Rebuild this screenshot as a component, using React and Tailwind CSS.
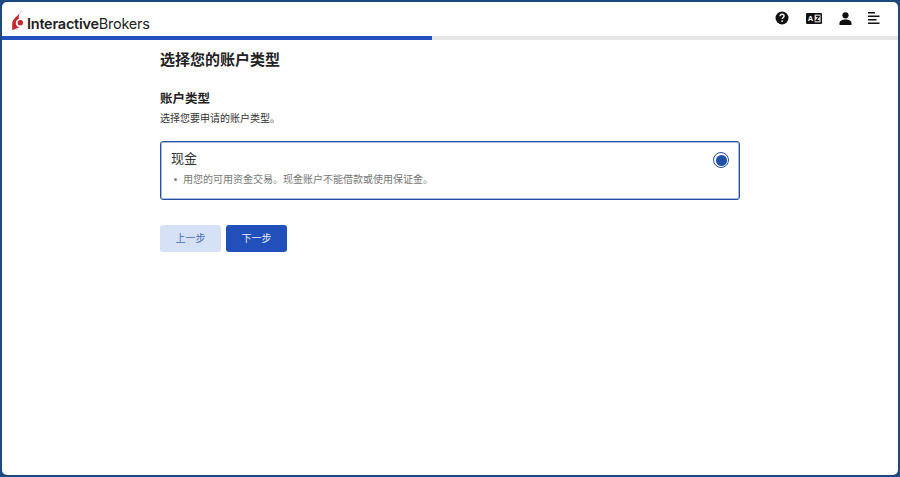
import { useState } from "react";

const FONT = "font-['Inter','Liberation_Sans','Noto_Sans_CJK_SC',sans-serif]";

function Logo() {
  return (
    <div className="flex items-end">
      <svg width="13" height="21" viewBox="0 0 13 21" className="shrink-0">
        <path d="M9.6 0 L9.2 1.4 C8 3.4 5.4 5.2 3 8 C1.2 10 0.2 11.6 0.2 13.6 L0.2 20.2 L7.4 17.2 C5 16.8 3.8 15 3.8 13 C3.8 11 5 9.6 6.8 9 C6.2 6 7.8 2.8 9.6 0 Z" fill="#c8252c" />
        <circle cx="8.3" cy="12.8" r="2.7" fill="#c8252c" />
      </svg>
      <span className="ml-[2px] text-[14.5px] leading-[15px] tracking-[-0.25px] text-[#222]">
        <span className="font-semibold">Interactive</span>Brokers
      </span>
    </div>
  );
}

function HelpIcon() {
  return (
    <svg width="14" height="14" viewBox="0 0 14 14">
      <circle cx="7" cy="7" r="6.5" fill="#111" />
      <path d="M5 5.3 C5 4 6 3.3 7.1 3.3 C8.3 3.3 9.1 4.1 9.1 5.1 C9.1 6.5 7.3 6.6 7.3 8" fill="none" stroke="#fff" strokeWidth="1.4" />
      <circle cx="7.2" cy="10.1" r="0.9" fill="#fff" />
    </svg>
  );
}

function TranslateIcon() {
  return (
    <svg width="16" height="11" viewBox="0 0 16 11">
      <rect x="0" y="0" width="16" height="11" rx="1.2" fill="#111" />
      <text x="4.4" y="8.4" fontSize="7.5" fontWeight="700" textAnchor="middle" fill="#fff" fontFamily="Liberation Sans">A</text>
      <rect x="8.6" y="1.6" width="6" height="7.8" fill="#ddd" />
      <path d="M10 3.4 H13.2 L10 7.6 H13.4" fill="none" stroke="#111" strokeWidth="1.1" />
    </svg>
  );
}

function UserIcon() {
  return (
    <svg width="13" height="13" viewBox="0 0 13 13">
      <circle cx="6.5" cy="3.3" r="3.1" fill="#111" />
      <path d="M0.5 13 V11.2 C0.5 8.8 3.2 7.5 6.5 7.5 C9.8 7.5 12.5 8.8 12.5 11.2 V13 Z" fill="#111" />
    </svg>
  );
}

function MenuIcon() {
  return (
    <svg width="12" height="12" viewBox="0 0 12 12">
      <path d="M0 0.8 H7 M0 4.3 H11.5 M0 7.8 H8.5 M0 11.3 H11.5" stroke="#111" strokeWidth="1.5" />
    </svg>
  );
}

export default function App() {
  const [selected] = useState(true);

  return (
    <div className={`${FONT} h-[477px] w-[900px] overflow-hidden bg-[#1c4a80] p-[2px]`}>
      <div className="flex h-full flex-col overflow-hidden rounded-[5px] bg-white">
        <header className="flex h-[34px] shrink-0 items-center justify-between pl-[10px] pr-[18px]">
          <div className="mt-[3px]">
            <Logo />
          </div>
          <div className="mt-[-2px] flex items-center">
            <div className="flex w-[14px] justify-center"><HelpIcon /></div>
            <div className="ml-[17px] flex w-[16px] justify-center"><TranslateIcon /></div>
            <div className="ml-[17px] flex w-[13px] justify-center"><UserIcon /></div>
            <div className="ml-[16px] flex w-[12px] justify-center"><MenuIcon /></div>
          </div>
        </header>

        <div className="h-[4px] shrink-0 bg-[#e6e6e6]">
          <div className="h-full w-[430px] bg-[#2150bb]" />
        </div>

        <main className="ml-[158px] w-[580px]">
          <h1 className="mt-[9px] text-[15px] font-semibold leading-[22px] text-[#222]">选择您的账户类型</h1>
          <h2 className="mt-[19px] text-[12.5px] font-semibold leading-[18px] text-[#222]">账户类型</h2>
          <p className="mt-[3px] text-[10px] leading-[15px] text-[#333]">选择您要申请的账户类型。</p>

          <div className="mt-[15px] flex h-[59px] items-start justify-between rounded-[3px] border border-[#2150a8] pl-[10px] pr-[10px] shadow-[inset_0_0_0_1px_rgba(42,88,180,0.4)]">
            <div>
              <div className="mt-[7px] text-[13px] leading-[18px] text-[#333]">现金</div>
              <ul className="mt-[5px] flex items-center text-[10px] leading-[15px] text-[#777]">
                <li className="flex items-center">
                  <span className="ml-[3px] mr-[6px] h-[3px] w-[3px] rounded-full bg-[#888]" />
                  用您的可用资金交易。现金账户不能借款或使用保证金。
                </li>
              </ul>
            </div>
            <span className="mt-[10px] flex h-[16px] w-[16px] items-center justify-center rounded-full border border-[#2150a8]">
              {selected && <span className="h-[11px] w-[11px] rounded-full bg-[#2150a8]" />}
            </span>
          </div>

          <div className="mt-[25px] flex gap-[5px]">
            <button className="h-[27px] w-[61px] rounded-[3px] bg-[#d6e1f6] text-[10px] text-[#4a6cb8]">上一步</button>
            <button className="h-[27px] w-[61px] rounded-[3px] bg-[#2150bb] text-[10px] text-[#e8eefb]">下一步</button>
          </div>
        </main>
      </div>
    </div>
  );
}
